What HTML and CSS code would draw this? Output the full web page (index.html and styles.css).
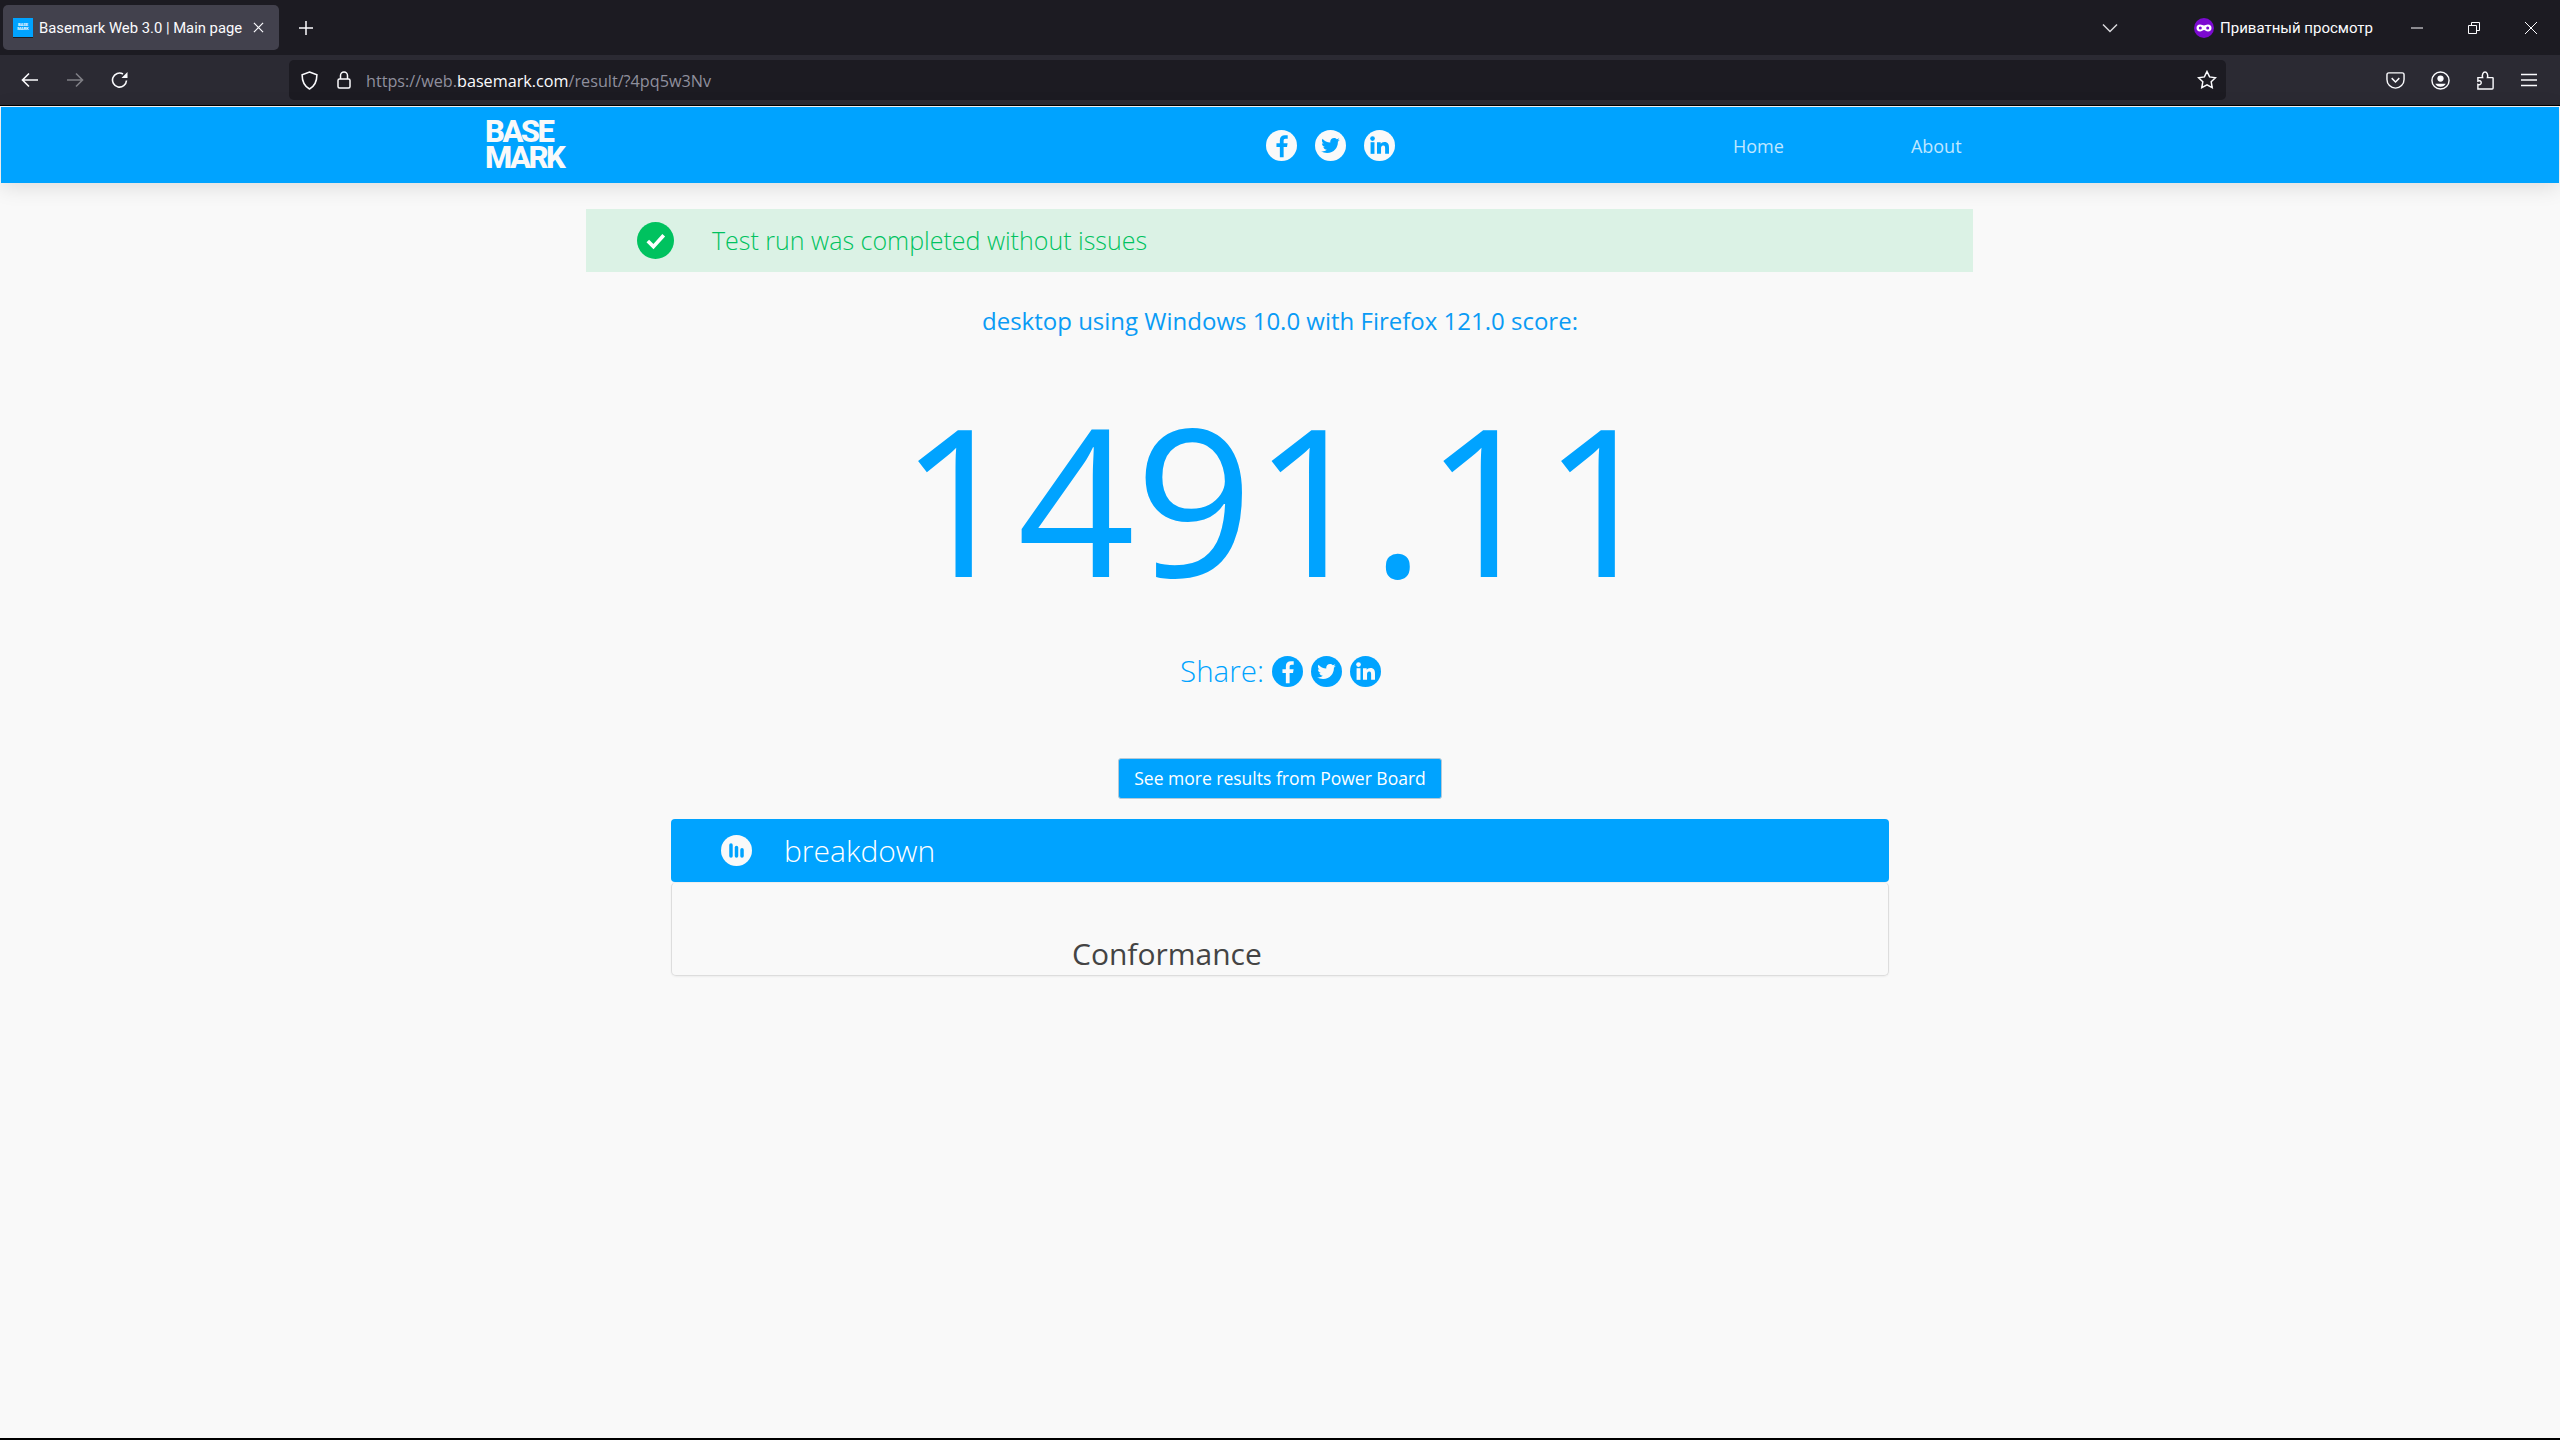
FILE: index.html
```html
<!DOCTYPE html>
<html lang="en">
<head>
    <meta charset="utf-8">
    <title>Basemark Web 3.0 | Main page</title>
    <link rel="stylesheet" href="styles.css">
</head>
<body>
    <svg class="defs" width="0" height="0" aria-hidden="true">
        <symbol id="ic-fb" viewBox="0 0 32 32">
            <circle cx="16" cy="16" r="16" fill="currentColor"/>
            <path class="glyph" d="M18.2 28v-10.4h3.5l.6-4h-4.1v-2.5c0-1.2.4-2 2.1-2h2.1V5.500c-.4-.1-1.600-.2-3-.2-3 0-5.100 1.800-5.100 5.200v3.100h-3.500v4h3.500V28z"/>
        </symbol>
        <symbol id="ic-tw" viewBox="0 0 32 32">
            <circle cx="16" cy="16" r="16" fill="currentColor"/>
            <path class="glyph" transform="translate(6.400 6.400) scale(.8)" d="M23.954 4.569c-.885.389-1.83.654-2.825.775 1.014-.611 1.794-1.574 2.163-2.723-.951.555-2.005.959-3.127 1.184-.896-.959-2.173-1.559-3.591-1.559-2.717 0-4.92 2.203-4.92 4.917 0 .39.045.765.127 1.124C7.691 8.094 4.066 6.13 1.64 3.161c-.427.722-.666 1.561-.666 2.475 0 1.71.87 3.213 2.188 4.096-.807-.026-1.566-.248-2.228-.616v.061c0 2.385 1.693 4.374 3.946 4.827-.413.111-.849.171-1.296.171-.314 0-.615-.03-.916-.086.631 1.953 2.445 3.377 4.604 3.417-1.68 1.319-3.809 2.105-6.102 2.105-.39 0-.779-.023-1.17-.067 2.189 1.394 4.768 2.209 7.557 2.209 9.054 0 13.999-7.496 13.999-13.986 0-.209 0-.42-.015-.63.961-.689 1.8-1.56 2.46-2.548l-.047-.02z"/>
        </symbol>
        <symbol id="ic-in" viewBox="0 0 32 32">
            <circle cx="16" cy="16" r="16" fill="currentColor"/>
            <rect class="glyph" x="6.800" y="12.600" width="4" height="12"/>
            <circle class="glyph" cx="8.800" cy="8.900" r="2.400"/>
            <path class="glyph" d="M13.400 12.600h3.800v1.700c.6-1 1.900-2 3.800-2 4 0 4.800 2.600 4.800 6v6.300h-4v-5.600c0-1.300 0-3.100-1.900-3.100s-2.300 1.500-2.300 3v5.700h-4.200z"/>
        </symbol>
    </svg>

    <div class="tabbar">
        <div class="tab">
            <span class="favicon"><span>BASE<br>MARK</span></span>
            <span class="tab-title">Basemark Web 3.0 | Main page</span>
            <svg class="tab-close" viewBox="0 0 12 12"><path d="M1 1l10 10M11 1L1 11"/></svg>
        </div>
        <svg class="new-tab" viewBox="0 0 16 16"><path d="M8 1v14M1 8h14"/></svg>
        <div class="tabbar-right">
            <svg class="tab-list" viewBox="0 0 16 10"><path d="M1 1.500l7 7 7-7"/></svg>
            <div class="private">
                <svg viewBox="0 0 20 20">
                    <circle cx="10" cy="10" r="10" fill="#7c0ad0"/>
                    <path fill="#fff" d="M6 6.500c1.800 0 2.900 1 4 1s2.200-1 4-1c2.200 0 3.500 1.500 3.500 3.500s-1.300 3.500-3.500 3.500c-1.800 0-2.900-1.500-4-1.500s-2.200 1.500-4 1.500c-2.200 0-3.500-1.500-3.500-3.500S3.800 6.500 6 6.500z"/>
                    <circle cx="6.300" cy="10" r="1.500" fill="#7c0ad0"/>
                    <circle cx="13.700" cy="10" r="1.500" fill="#7c0ad0"/>
                </svg>
                <span>Приватный просмотр</span>
            </div>
            <div class="win-buttons">
                <svg viewBox="0 0 12 12"><path d="M0 6h12"/></svg>
                <svg viewBox="0 0 12 12"><path d="M.5 3.500h8v8h-8zM3.500 3.500v-3h8v8h-3"/></svg>
                <svg viewBox="0 0 12 12"><path d="M0 0l12 12M12 0L0 12"/></svg>
            </div>
        </div>
    </div>

    <div class="toolbar">
        <div class="nav-buttons">
            <svg viewBox="0 0 18 16"><path d="M17 8H2M8 1.500L1.500 8 8 14.500"/></svg>
            <svg class="disabled" viewBox="0 0 18 16"><path d="M1 8h15M10 1.500L16.500 8 10 14.500"/></svg>
            <svg viewBox="0 0 18 18"><path d="M15.500 9.500A7 7 0 1 1 12 3"/><path class="solid" d="M16.500 1v6h-6z"/></svg>
        </div>
        <div class="urlbar">
            <svg class="shield" viewBox="0 0 16 18"><path d="M8 1l7 2.500c0 6-1.500 10.500-7 13.500C2.500 14 1 9.500 1 3.500z"/></svg>
            <svg class="lock" viewBox="0 0 14 18"><rect x="1" y="8" width="12" height="9" rx="1.500"/><path d="M3.500 8V4.500a3.500 3.500 0 0 1 7 0V8"/></svg>
            <span class="url">https://web.<b>basemark.com</b>/result/?4pq5w3Nv</span>
            <svg class="star" viewBox="0 0 20 20"><path d="M10 1.500l2.600 5.400 5.900.8-4.300 4.100 1 5.900L10 14.900l-5.200 2.800 1-5.900L1.500 7.700l5.900-.8z"/></svg>
        </div>
        <div class="tool-icons">
            <svg viewBox="0 0 20 18"><path d="M3 1h14a2 2 0 0 1 2 2v5a9 9 0 0 1-18 0V3a2 2 0 0 1 2-2z"/><path d="M6 6.500l4 4 4-4"/></svg>
            <svg viewBox="0 0 20 20"><circle cx="10" cy="10" r="9"/><circle class="solid" cx="10" cy="8" r="3.300"/><path class="solid" d="M4.500 13.500h11c-1 2-3 3-5.500 3s-4.500-1-5.500-3z"/></svg>
            <svg viewBox="0 0 18 20"><path d="M1 19v-5c2 1 3.500-.2 3.500-1.700S3 9.500 1 10.600V7h5c-1-3 .5-6 2.500-6S12 4 11 7h5.500a.5.500 0 0 1 .5.500V18a1 1 0 0 1-1 1z"/></svg>
            <svg viewBox="0 0 16 14"><path d="M0 1.500h16M0 7h16M0 12.500h16"/></svg>
        </div>
    </div>

    <div class="page">
        <nav class="site-nav">
            <div class="logo">BASE<br>MARK</div>
            <div class="nav-social">
                <svg><use href="#ic-fb"/></svg>
                <svg><use href="#ic-tw"/></svg>
                <svg><use href="#ic-in"/></svg>
            </div>
            <div class="nav-links">
                <a>Home</a>
                <a>About</a>
            </div>
        </nav>

        <div class="alert-ok">
            <svg viewBox="0 0 36 36">
                <circle cx="18" cy="18" r="18" fill="#00c25f"/>
                <path d="M10.500 18.500l5.500 5.500 10-11" fill="none" stroke="#fff" stroke-width="3.600"/>
            </svg>
            <span>Test run was completed without issues</span>
        </div>

        <p class="score-title">desktop using Windows 10.0 with Firefox 121.0 score:</p>
        <div class="score">1491.11</div>

        <div class="share">
            <span>Share:</span>
            <svg><use href="#ic-fb"/></svg>
            <svg><use href="#ic-tw"/></svg>
            <svg><use href="#ic-in"/></svg>
        </div>

        <a class="btn-results">See more results from Power Board</a>

        <section class="breakdown">
            <header class="breakdown-head">
                <svg viewBox="0 0 32 32">
                    <circle cx="16" cy="16" r="16" fill="#f9f9f9"/>
                    <rect x="8.500" y="8.500" width="3.600" height="15" rx="1.800" fill="#00a3ff"/>
                    <rect x="14.200" y="11" width="3.600" height="12.500" rx="1.800" fill="#00a3ff"/>
                    <rect x="19.900" y="13.500" width="3.600" height="10" rx="1.800" fill="#00a3ff"/>
                </svg>
                <h2>breakdown</h2>
            </header>
            <div class="breakdown-body">
                <h3>Conformance</h3>
            </div>
        </section>
    </div>
</body>
</html>
```

FILE: styles.css
```css
* {
    box-sizing: border-box;
}
html, body {
    margin: 0;
    height: 100%;
}
body {
    display: flex;
    flex-direction: column;
    height: 1440px;
    background: #000;
    font-family: "Open Sans", sans-serif;
    overflow: hidden;
}
svg {
    display: block;
}
.defs {
    position: absolute;
}
.glyph {
    fill: var(--glyph);
}

/* browser chrome */
.tabbar {
    display: flex;
    align-items: center;
    height: 55px;
    padding: 0 0 0 3px;
    background: #1c1b22;
    color: #fbfbfe;
    font-family: Roboto, sans-serif;
}
.tab {
    display: flex;
    align-items: center;
    width: 276px;
    height: 45px;
    padding: 0 15px 0 10px;
    border-radius: 5px;
    background: #42414d;
}
.favicon {
    display: flex;
    align-items: center;
    justify-content: center;
    width: 20px;
    height: 20px;
    background: #00a3ff;
    border-bottom: 1px solid #1c1b22;
    font-size: 4px;
    font-weight: 700;
    line-height: 4px;
    text-align: center;
}
.tab-title {
    margin-left: 6px;
    font-size: 14.800px;
    white-space: nowrap;
}
.tab-close {
    width: 11px;
    height: 11px;
    margin-left: auto;
    fill: none;
    stroke: #fbfbfe;
    stroke-width: 1.300;
}
.new-tab {
    width: 16px;
    height: 16px;
    margin-left: 19px;
    fill: none;
    stroke: #fbfbfe;
    stroke-width: 1.500;
}
.tabbar-right {
    display: flex;
    align-items: center;
    margin-left: auto;
}
.tab-list {
    width: 16px;
    height: 10px;
    fill: none;
    stroke: #d8d8dc;
    stroke-width: 1.500;
}
.private {
    display: flex;
    align-items: center;
    gap: 6.500px;
    margin-left: 76px;
    font-size: 15px;
}
.private svg {
    width: 20px;
    height: 20px;
}
.win-buttons {
    display: flex;
    align-items: center;
    gap: 45px;
    margin-left: 38px;
    padding-right: 23px;
}
.win-buttons svg {
    width: 12px;
    height: 12px;
    fill: none;
    stroke: #fbfbfe;
    stroke-width: 1;
}
.toolbar {
    display: flex;
    align-items: center;
    height: 50px;
    background: #2b2a33;
    color: #fbfbfe;
}
.nav-buttons {
    display: flex;
    align-items: center;
    gap: 27px;
    width: 289px;
    padding-left: 21px;
}
.nav-buttons svg {
    width: 18px;
    height: 18px;
    fill: none;
    stroke: #fbfbfe;
    stroke-width: 1.600;
}
.nav-buttons .disabled {
    opacity: .4;
}
.solid {
    fill: #fbfbfe;
    stroke: none;
}
.urlbar {
    display: flex;
    align-items: center;
    width: 1937px;
    height: 40px;
    padding: 0 9px 0 12px;
    border-radius: 5px;
    background: #1c1b22;
}
.urlbar svg {
    fill: none;
    stroke: #fbfbfe;
    stroke-width: 1.500;
}
.shield {
    width: 17px;
    height: 19px;
}
.lock {
    width: 14px;
    height: 18px;
    margin-left: 19px;
}
.url {
    margin: 1px 0 0 15px;
    color: #8f8f9d;
    font-size: 16.200px;
    white-space: nowrap;
}
.url b {
    color: #fbfbfe;
    font-weight: 400;
}
.urlbar .star {
    width: 20px;
    height: 20px;
    margin-left: auto;
}
.tool-icons {
    display: flex;
    align-items: center;
    gap: 26px;
    padding-left: 160px;
}
.tool-icons svg {
    width: 19px;
    height: 19px;
    fill: none;
    stroke: #fbfbfe;
    stroke-width: 1.500;
}
.tool-icons svg:last-child {
    width: 16px;
    height: 14px;
}

/* page */
.page {
    display: flex;
    flex-direction: column;
    align-items: center;
    flex: 1;
    margin: 1px 0 2px;
    background: #f9f9f9;
}
.site-nav {
    --glyph: #00a3ff;
    align-self: stretch;
    display: flex;
    align-items: center;
    height: 76px;
    margin: 1px 1px 0;
    padding-left: 484px;
    background: #00a3ff;
    box-shadow: 0 4px 20px rgba(0, 0, 0, .12);
}
.logo {
    width: 78px;
    color: #f9f9f9;
    font-family: Roboto, sans-serif;
    font-size: 31px;
    font-weight: 800;
    line-height: 26px;
    letter-spacing: -2.500px;
}
.nav-social {
    display: flex;
    gap: 18px;
    margin-left: 703px;
    color: #f9f9f9;
}
.nav-social svg {
    width: 31px;
    height: 31px;
}
.nav-links {
    display: flex;
    gap: 127px;
    margin: 1px 0 0 338px;
    color: rgba(255, 255, 255, .75);
    font-size: 18px;
}
.alert-ok {
    display: flex;
    align-items: center;
    width: 1387px;
    height: 63px;
    margin: 26px 1px 0 0;
    padding-left: 51px;
    background: #dbf2e5;
    color: #00c25f;
    font-size: 25px;
    font-weight: 300;
}
.alert-ok span {
    margin-bottom: 2px;
}
.alert-ok svg {
    width: 37px;
    height: 37px;
    margin-right: 38px;
}
.score-title {
    margin: 32px 0 0;
    color: #0a9bf5;
    font-size: 24px;
    line-height: 33px;
}
.score {
    margin-top: 8px;
    color: #00a3ff;
    font-size: 206px;
    font-weight: 400;
    line-height: 304px;
}
.share {
    --glyph: #f9f9f9;
    display: flex;
    align-items: center;
    gap: 8px;
    margin-left: 1px;
    color: #00a3ff;
    font-size: 29.500px;
    font-weight: 300;
    line-height: 44px;
}
.share svg {
    width: 31px;
    height: 31px;
}
.btn-results {
    width: 324px;
    height: 41px;
    margin-top: 65px;
    border: 1px solid #b5c9d6;
    border-radius: 3px;
    background: #00a3ff;
    color: #fff;
    font-size: 17.500px;
    line-height: 39px;
    text-align: center;
}
.breakdown {
    width: 1218px;
    margin-top: 20px;
}
.breakdown-head {
    display: flex;
    align-items: center;
    height: 63px;
    padding-left: 50px;
    border-radius: 4px;
    background: #00a3ff;
    color: #fff;
}
.breakdown-head svg {
    width: 31px;
    height: 31px;
    margin-right: 32px;
}
.breakdown-head h2 {
    margin: 0;
    font-size: 30px;
    font-weight: 300;
}
.breakdown-body {
    height: 94px;
    padding: 51px 0 0 400px;
    border: 1px solid #ddd;
    border-top-color: #eee;
    border-radius: 5px;
    box-shadow: 0 1px 2px rgba(0, 0, 0, .05);
}
.breakdown-body h3 {
    margin: 0;
    color: #444;
    font-size: 30px;
    font-weight: 400;
    line-height: 40px;
}
```
